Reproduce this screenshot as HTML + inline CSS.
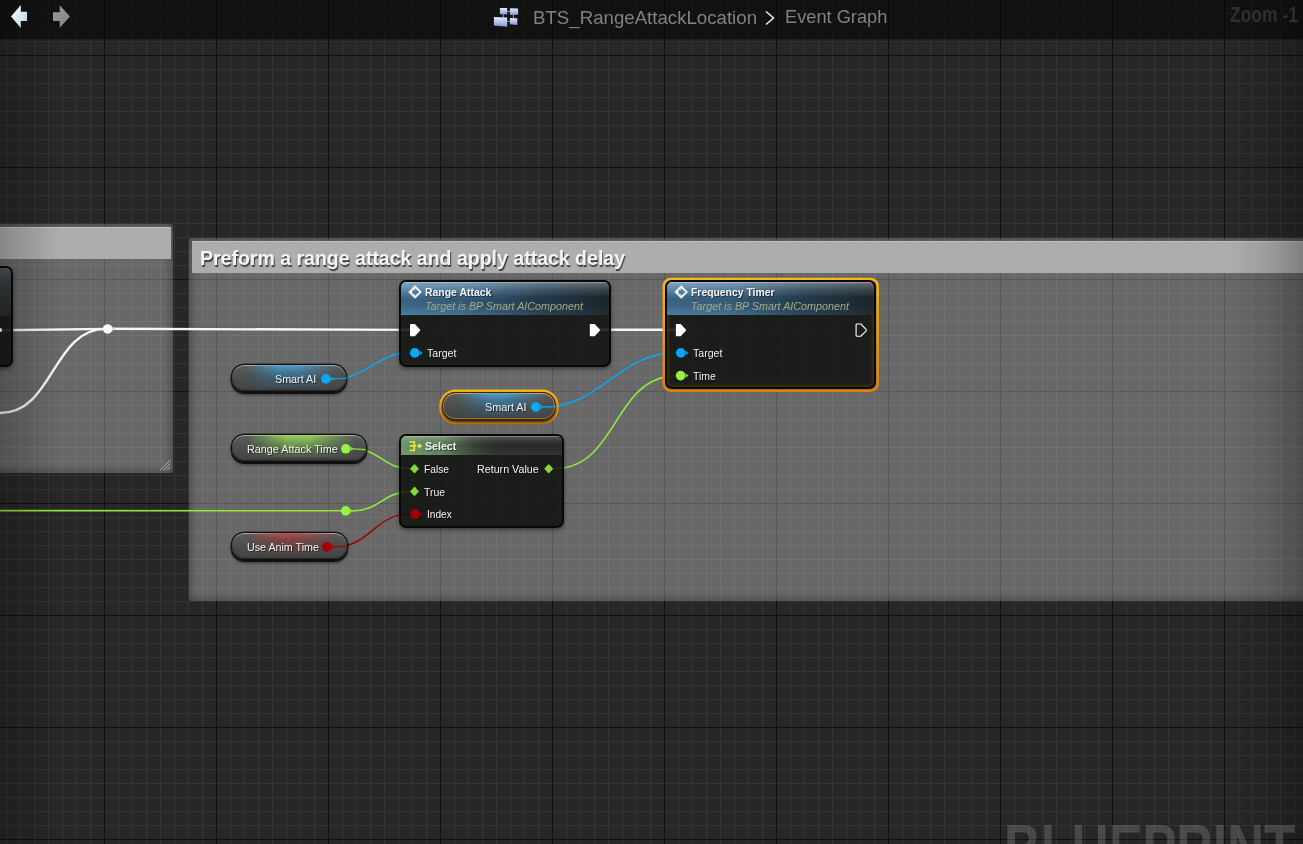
<!DOCTYPE html>
<html>
<head>
<meta charset="utf-8">
<title>BTS_RangeAttackLocation - Event Graph</title>
<style>
html,body{margin:0;padding:0;background:#262626;}
body{width:1303px;height:844px;overflow:hidden;position:relative;font-family:"Liberation Sans",sans-serif;}
#g{position:absolute;left:0;top:0;width:1303px;height:844px;overflow:hidden;background-color:#272727;
background-image:
 linear-gradient(to right,#111 1px,transparent 1px),
 linear-gradient(to bottom,#111 1px,transparent 1px),
 linear-gradient(to right,#343434 1px,transparent 1px),
 linear-gradient(to bottom,#343434 1px,transparent 1px);
background-size:112px 112px,112px 112px,14px 14px,14px 14px;
background-position:104px 0,0 55px,6px 0,0 13px;}
.abs{position:absolute;}
.t{position:absolute;white-space:nowrap;line-height:1;transform-origin:0 0;}
/* comments */
.cm{position:absolute;background:rgba(255,255,255,0.3);border-radius:3px;box-shadow:inset 0 0 9px 2px rgba(0,0,0,0.3);}
.cmt{position:absolute;background:#adadad;box-shadow:inset 0 1px 0 rgba(255,255,255,0.25);}
/* nodes */
.node{position:absolute;box-sizing:border-box;border:2px solid #080808;border-radius:7px;background:rgba(16,18,16,0.87);box-shadow:0 2px 4px rgba(0,0,0,0.45);overflow:hidden;}
.hdr{position:absolute;left:0;top:0;right:0;}
.pill{position:absolute;box-sizing:border-box;border:solid #101010;border-width:1px 1px 2px 1px;border-radius:13.5px;background:linear-gradient(to bottom,rgba(88,92,90,0.84) 0,rgba(70,74,72,0.84) 45%,rgba(60,63,62,0.86) 100%);box-shadow:0 2px 3px rgba(0,0,0,0.45),0 0 0 0.5px rgba(0,0,0,0.7),0 1px 0 rgba(0,0,0,0.6),inset 0 1px 0.5px rgba(255,255,255,0.5),inset 0 -1px 2px rgba(0,0,0,0.5);overflow:hidden;}
.pill i{position:absolute;left:11%;right:7%;top:0;height:84%;-webkit-mask-image:linear-gradient(to right,transparent 0,#000 36%,#000 56%,transparent 100%);mask-image:linear-gradient(to right,transparent 0,#000 36%,#000 56%,transparent 100%);}
.sel{position:absolute;box-sizing:border-box;border:2px solid #f0a010;}
.w{color:#f2f2f2;text-shadow:1px 1px 0 rgba(0,0,0,0.7);}

.fn{background:
 linear-gradient(to bottom,rgba(255,255,255,0.30) 0,rgba(255,255,255,0.12) 22%,rgba(255,255,255,0) 45%),
 linear-gradient(to bottom,rgba(8,16,24,0) 15%,rgba(8,16,24,0.26) 55%,rgba(8,16,24,0.2) 72%,rgba(8,16,24,0) 100%),
 linear-gradient(97deg,rgba(78,130,168,0.97) 0,rgba(70,120,158,0.93) 30%,rgba(48,80,104,0.8) 66%,rgba(38,52,62,0.6) 100%);
 box-shadow:inset 0 1px 0 rgba(255,255,255,0.3);}
.vb i{background:linear-gradient(to bottom,rgba(88,165,210,0.9) 0,rgba(58,130,176,0.8) 30%,rgba(48,106,144,0.5) 70%,rgba(44,96,132,0.35) 100%);}
.vg i{background:linear-gradient(to bottom,rgba(160,215,100,0.95) 0,rgba(128,185,80,0.85) 30%,rgba(100,140,70,0.55) 70%,rgba(92,128,66,0.4) 100%);}
.vr i{background:linear-gradient(to bottom,rgba(185,80,80,0.9) 0,rgba(140,62,62,0.75) 30%,rgba(112,60,60,0.5) 70%,rgba(104,58,58,0.35) 100%);}
.selp{border-color:#3a2606;box-shadow:0 2px 3px rgba(0,0,0,0.45),inset 0 0 0 1px rgba(235,160,30,0.5),inset 0 1px 0.5px rgba(255,255,255,0.5);}
</style>
</head>
<body>
<div id="g">
<div class="cm" style="left:-20px;top:224px;width:193px;height:249px;"></div>
<div class="cmt" style="left:-20px;top:227px;width:191px;height:32px;"></div>
<svg class="abs" style="left:158px;top:458px;" width="14" height="14" viewBox="0 0 14 14"><g stroke="#b5b5b5" stroke-width="1" fill="none"><path d="M2 12.5L12.5 2M5.5 12.5L12.5 5.5M9 12.5L12.5 9"/></g></svg>
<div class="cm" style="left:189px;top:238px;width:1140px;height:363px;"></div>
<div class="cmt" style="left:192px;top:241px;width:1140px;height:32px;"></div>

<svg class="abs" style="left:0;top:0;" width="1303" height="844" viewBox="0 0 1303 844" fill="none">
<g stroke="#f6f6f6" stroke-width="2.4" stroke-linecap="round">
<path d="M0 330.2L108 328.9"/>
<path d="M0 413C54 413 52 328.9 106 328.9"/>
<path d="M108 328.8L415 329.9"/>
<path d="M595 329.8L681 329.8"/>
</g>
<g stroke="#0ea5ee" stroke-width="1.6">
<path d="M326 378.9L333.3 378.9C367.8 378.9 375.4 352.9 409.9 352.9L415 352.9"/>
<path d="M536 407L543.8 407C601.8 407 618 352.9 676 352.9L681 352.9"/>
</g>
<g stroke="#90e83e" stroke-width="1.6">
<path d="M346 448.8L353.7 448.8C379.1 448.8 384.6 468.8 410 468.8L414 468.8"/>
<path d="M0 510.6L346 510.8"/>
<path d="M346 510.9L353.4 510.9C378.8 510.9 384.6 491.4 410 491.4L414 491.4"/>
<path d="M549 468.8L553.2 468.8C619.7 468.8 611.5 375.6 678 375.6L681 375.6"/>
</g>
<g stroke="#a00505" stroke-width="1.6">
<path d="M327 546.9L334.7 546.9C370.7 546.9 374.2 514 410.2 514L415 514"/>
</g>
<!-- reroute knots -->
<circle cx="107.65" cy="328.95" r="4.75" fill="#fbfbfb"/><path d="M112.3 326.6L115.3 328.9L112.3 331.2Z" fill="#d4d4d4"/>
<circle cx="345.7" cy="510.9" r="4.8" fill="#98f244"/><path d="M350.4 508.6L353.4 510.9L350.4 513.2Z" fill="#84d43a"/>
</svg>

<!-- left partial node -->
<div class="node" style="left:-30px;top:266px;width:43px;height:101px;">
 <div class="hdr" style="height:48px;background:linear-gradient(to bottom,#565b5e 0,#3a3e40 30%,#2a2d2e 100%);"></div>
</div>
<div class="abs" style="left:-1px;top:327.8px;width:3px;height:4.4px;border-radius:1.5px;background:#f4f4f4;"></div>

<!-- Range Attack -->
<div class="node" style="left:399px;top:280px;width:212px;height:87px;">
 <div class="hdr fn" style="height:33px;"></div>
</div>
<!-- Frequency Timer (selected) -->
<svg class="abs" style="left:0;top:0;" width="1303" height="844" viewBox="0 0 1303 844" fill="none">
<defs>
<linearGradient id="sg1" gradientUnits="userSpaceOnUse" x1="0" y1="278" x2="0" y2="392"><stop offset="0" stop-color="#f8b616"/><stop offset="1" stop-color="#e37b08"/></linearGradient>
<linearGradient id="sg2" gradientUnits="userSpaceOnUse" x1="0" y1="390" x2="0" y2="424"><stop offset="0" stop-color="#f8b616"/><stop offset="1" stop-color="#e37b08"/></linearGradient>
</defs>
<rect x="663.85" y="278.95" width="213.8" height="111.85" rx="7" ry="7" stroke="url(#sg1)" stroke-width="2.5"/>
<rect x="440.45" y="390.75" width="117" height="32.2" rx="15" ry="15" stroke="url(#sg2)" stroke-width="2.5"/>
</svg>
<div class="node" style="left:665px;top:280px;width:211px;height:109px;box-shadow:inset 0 0 3px 1.5px rgba(150,85,10,0.35);">
 <div class="hdr fn" style="height:33px;"></div>
</div>
<!-- Select -->
<div class="node" style="left:399px;top:434px;width:165px;height:94px;">
 <div class="hdr" style="height:19px;background:linear-gradient(to bottom,rgba(255,255,255,0.22) 0,rgba(255,255,255,0.05) 30%,rgba(255,255,255,0) 50%,rgba(255,255,255,0.06) 100%),linear-gradient(to right,rgba(112,152,106,0.95) 0,rgba(100,138,95,0.9) 24%,rgba(70,88,68,0.6) 45%,rgba(54,58,54,0.5) 58%,rgba(50,52,50,0.5) 100%);box-shadow:inset 0 1px 0 rgba(255,255,255,0.25);"></div>
</div>
<!-- variable pills -->
<div class="pill vb" style="left:231px;top:364px;width:116px;height:29px;"><i></i></div>
<div class="pill vb selp" style="left:442px;top:392px;width:114px;height:29px;"><i></i></div>
<div class="pill vg" style="left:231px;top:434px;width:136px;height:29px;"><i></i></div>
<div class="pill vr" style="left:231px;top:532px;width:117px;height:29px;"><i></i></div>

<!-- pins -->
<svg class="abs" style="left:0;top:0;" width="1303" height="844" viewBox="0 0 1303 844">
<!-- bright wire stubs over pills -->
<g fill="none" stroke-width="1.3" opacity="0.85">
<path d="M333 378.9L347 378.4" stroke="#0ea5ee"/>
<path d="M543 407L557 406.5" stroke="#0ea5ee"/>
<path d="M353 448.8L366 449.6" stroke="#90e83e"/>
<path d="M334 546.9L348 546.2" stroke="#a00505"/>
</g>
<!-- exec pins -->
<g transform="translate(410 330.1)" fill="#fcfcfc"><path d="M0 -5.3L0 5.3Q0 6.1 .8 6.1L4.8 6.1L10 0.7Q10.5 0 10 -0.7L4.8 -6.1L.8 -6.1Q0 -6.1 0 -5.3Z"/></g>
<g transform="translate(589.8 330.1)" fill="#fcfcfc"><path d="M0 -5.3L0 5.3Q0 6.1 .8 6.1L4.8 6.1L10 0.7Q10.5 0 10 -0.7L4.8 -6.1L.8 -6.1Q0 -6.1 0 -5.3Z"/></g>
<g transform="translate(675.9 330.1)" fill="#fcfcfc"><path d="M0 -5.3L0 5.3Q0 6.1 .8 6.1L4.8 6.1L10 0.7Q10.5 0 10 -0.7L4.8 -6.1L.8 -6.1Q0 -6.1 0 -5.3Z"/></g>
<g transform="translate(856.1 330.1)" fill="none" stroke="#fcfcfc" stroke-width="1.1"><path d="M0 -5.3L0 5.3Q0 6.1 .8 6.1L4.8 6.1L10 0.7Q10.5 0 10 -0.7L4.8 -6.1L.8 -6.1Q0 -6.1 0 -5.3Z"/></g>
<!-- object pins -->
<g fill="#0aa8f4">
<g transform="translate(414.8 352.9)" ><circle cx="0" cy="0" r="4.8"/><path d="M5 -2.3L7.9 0L5 2.3Z" opacity="0.85"/></g>
<g transform="translate(680.8 352.9)" ><circle cx="0" cy="0" r="4.8"/><path d="M5 -2.3L7.9 0L5 2.3Z" opacity="0.85"/></g>
<g transform="translate(325.9 378.9)" ><circle cx="0" cy="0" r="4.8"/><path d="M5 -2.3L7.9 0L5 2.3Z" opacity="0.85"/></g>
<g transform="translate(535.9 407)" ><circle cx="0" cy="0" r="4.8"/><path d="M5 -2.3L7.9 0L5 2.3Z" opacity="0.85"/></g>
</g>
<g fill="#98f244">
<g transform="translate(680.6 375.6)" ><circle cx="0" cy="0" r="4.8"/><path d="M5 -2.3L7.9 0L5 2.3Z" opacity="0.85"/></g>
<g transform="translate(345.8 448.8)" ><circle cx="0" cy="0" r="4.8"/><path d="M5 -2.3L7.9 0L5 2.3Z" opacity="0.85"/></g>
</g>
<g fill="#a30000">
<g transform="translate(326.8 546.9)" ><circle cx="0" cy="0" r="4.8"/><path d="M5 -2.3L7.9 0L5 2.3Z" opacity="0.85"/></g>
<g transform="translate(415 514)" ><circle cx="0" cy="0" r="4.8"/><path d="M5 -2.3L7.9 0L5 2.3Z" opacity="0.85"/></g>
</g>
<!-- wildcard diamonds -->
<g fill="#86d83c">
<path d="M410 468.8L414.5 464L419 468.8L414.5 473.6Z"/>
<path d="M410 491.4L414.5 486.6L419 491.4L414.5 496.2Z"/>
<path d="M544.2 468.8L548.7 464L553.2 468.8L548.7 473.6Z"/>
</g>
<!-- function icons -->
<g fill="#fafafa" stroke="#fafafa" stroke-width="0.5" stroke-linejoin="round">
<g transform="translate(415.05 291.95)" ><path fill-rule="evenodd" d="M-6.5 0L0 -6.5L6.5 0L0 6.5Z M-3 -2.2L-0.6 -2.2L-0.6 -4.5L4.7 0L-0.6 4.5L-0.6 2.2L-3 2.2Z"/></g>
<g transform="translate(681.2 291.95)" ><path fill-rule="evenodd" d="M-6.5 0L0 -6.5L6.5 0L0 6.5Z M-3 -2.2L-0.6 -2.2L-0.6 -4.5L4.7 0L-0.6 4.5L-0.6 2.2L-3 2.2Z"/></g>
</g>
<!-- select icon -->
<g fill="none" stroke="#e6e63a" stroke-width="1.7">
<path d="M409.6 441.75L414.25 441.75L414.25 450.35L409.6 450.35M409.8 445.95L416 445.95"/>
</g>
<path d="M416.8 445.2L418.6 445.2L418.6 443.1L422.4 446L418.6 448.9L418.6 446.8L416.8 446.8Z" fill="#e6e63a"/>
</svg>

<div class="abs" style="left:0;top:0;width:1303px;height:39px;background:rgba(0,0,0,0.56);"></div>
<div class="abs" style="left:0;top:39px;width:1303px;height:3px;background:linear-gradient(to bottom,rgba(0,0,0,0.22),rgba(0,0,0,0));"></div>
<div class="abs" style="left:0;top:0;width:60px;height:844px;background:linear-gradient(to right,rgba(0,0,0,0.22),rgba(0,0,0,0));"></div>
<div class="abs" style="left:1228px;top:0;width:75px;height:844px;background:linear-gradient(to left,rgba(0,0,0,0.26),rgba(0,0,0,0.1) 45%,rgba(0,0,0,0));"></div>
<!-- nav arrows -->
<svg class="abs" style="left:0;top:0;" width="100" height="39" viewBox="0 0 100 39">
<defs><linearGradient id="ag" x1="0" y1="0" x2="1" y2="1"><stop offset="0" stop-color="#ffffff"/><stop offset="1" stop-color="#b9d4de"/></linearGradient>
<linearGradient id="ag2" x1="0" y1="0" x2="1" y2="1"><stop offset="0" stop-color="#9a9a9a"/><stop offset="1" stop-color="#848484"/></linearGradient></defs>
<path d="M11 16.4L20.8 4.9L20.8 11.7L27 11.7L27 20.9L20.8 20.9L20.8 27.9Z" fill="url(#ag)"/>
<path d="M70 16.5L59.7 5.3L59.7 12.2L53 12.2L53 21L59.7 21L59.7 27.7Z" fill="url(#ag2)"/>
</svg>
<!-- blueprint icon -->
<svg class="abs" style="left:493px;top:7px;" width="26" height="21" viewBox="0 0 26 21">
<defs><linearGradient id="bg1" x1="0" y1="0" x2="0" y2="1"><stop offset="0" stop-color="#e4eaff"/><stop offset="1" stop-color="#8a97d4"/></linearGradient></defs>
<path d="M14.2 4.4L16.9 4.4M10.3 7.4L10.3 10.3M20.4 7.9L20.4 11M14.2 14.4L16.9 14.4" stroke="#9aa6d6" stroke-width="1" fill="none"/>
<g fill="url(#bg1)">
<path d="M6.9 1L14.2 1.1L14.2 7.6L6.9 7.3Z"/>
<path d="M16.9 1.3L25.1 1.6L25.1 7.8L16.9 8Z"/>
<path d="M0.9 10.1L14.2 10.5L14.2 19.8L0.9 18.6Z"/>
<path d="M16.9 10.9L24.3 11.2L24.3 17.9L16.9 17.3Z"/>
</g>
</svg>
<!-- chevron -->
<svg class="abs" style="left:763px;top:9px;" width="14" height="18" viewBox="0 0 14 18"><path d="M3 2.5L10.5 9L3 15.5" fill="none" stroke="#eeeeee" stroke-width="1.5"/></svg>

<div id="tx" style="position:absolute;left:0;top:0;width:1303px;height:844px;opacity:0.999;">
<span class="t" style="left:532.6px;top:8.74px;font-size:18.5px;transform:scaleX(1.0084);color:#818181;">BTS_RangeAttackLocation</span>
<span class="t" style="left:784.6px;top:8.34px;font-size:18.5px;transform:scaleX(0.9848);color:#818181;">Event Graph</span>
<span class="t" style="left:1229.5px;top:4.70px;font-size:21.5px;transform:scaleX(0.8133);color:#2f2f2f;font-weight:bold;">Zoom -1</span>
<span class="t" style="left:200px;top:247.79px;font-size:20.8px;transform:scaleX(0.9380);color:#f4f4f4;font-weight:bold;text-shadow:1px 1.5px 1px rgba(0,0,0,0.65);">Preform a range attack and apply attack delay</span>
<span class="t" style="left:425.4px;top:286.66px;font-size:10.8px;transform:scaleX(0.9663);color:#f4f4f4;font-weight:bold;text-shadow:1px 1px 0 rgba(0,0,0,0.5);">Range Attack</span>
<span class="t" style="left:425.4px;top:301.36px;font-size:10.8px;transform:scaleX(0.9972);color:#a4a983;font-style:italic;">Target is BP Smart AIComponent</span>
<span class="t" style="left:427.0px;top:347.71px;font-size:10.5px;transform:scaleX(1.0073);color:#f0f0f0;text-shadow:1px 1px 0 rgba(0,0,0,0.5);">Target</span>
<span class="t" style="left:691.4px;top:286.66px;font-size:10.8px;transform:scaleX(0.9618);color:#f4f4f4;font-weight:bold;text-shadow:1px 1px 0 rgba(0,0,0,0.5);">Frequency Timer</span>
<span class="t" style="left:691.4px;top:301.36px;font-size:10.8px;transform:scaleX(0.9972);color:#a4a983;font-style:italic;">Target is BP Smart AIComponent</span>
<span class="t" style="left:692.8px;top:347.71px;font-size:10.5px;transform:scaleX(1.0073);color:#f0f0f0;text-shadow:1px 1px 0 rgba(0,0,0,0.5);">Target</span>
<span class="t" style="left:692.8px;top:370.61px;font-size:10.5px;transform:scaleX(0.9890);color:#f0f0f0;text-shadow:1px 1px 0 rgba(0,0,0,0.5);">Time</span>
<span class="t" style="left:274.5px;top:373.81px;font-size:10.5px;transform:scaleX(1.0232);color:#f0f0f0;text-shadow:1px 1px 0 rgba(0,0,0,0.45);">Smart AI</span>
<span class="t" style="left:485.2px;top:401.81px;font-size:10.5px;transform:scaleX(1.0331);color:#f0f0f0;text-shadow:1px 1px 0 rgba(0,0,0,0.45);">Smart AI</span>
<span class="t" style="left:247.3px;top:443.71px;font-size:10.5px;transform:scaleX(1.0302);color:#f0f0f0;text-shadow:1px 1px 0 rgba(0,0,0,0.45);">Range Attack Time</span>
<span class="t" style="left:424.8px;top:440.56px;font-size:10.8px;transform:scaleX(0.9839);color:#f4f4f4;font-weight:bold;text-shadow:1px 1px 0 rgba(0,0,0,0.5);">Select</span>
<span class="t" style="left:424.3px;top:463.51px;font-size:10.5px;transform:scaleX(0.9732);color:#f0f0f0;text-shadow:1px 1px 0 rgba(0,0,0,0.5);">False</span>
<span class="t" style="left:424.3px;top:486.91px;font-size:10.5px;transform:scaleX(0.9904);color:#f0f0f0;text-shadow:1px 1px 0 rgba(0,0,0,0.5);">True</span>
<span class="t" style="left:427.2px;top:508.71px;font-size:10.5px;transform:scaleX(0.9655);color:#f0f0f0;text-shadow:1px 1px 0 rgba(0,0,0,0.5);">Index</span>
<span class="t" style="left:476.8px;top:463.51px;font-size:10.5px;transform:scaleX(1.0196);color:#f0f0f0;text-shadow:1px 1px 0 rgba(0,0,0,0.5);">Return Value</span>
<span class="t" style="left:247.4px;top:541.71px;font-size:10.5px;transform:scaleX(1.0183);color:#f0f0f0;text-shadow:1px 1px 0 rgba(0,0,0,0.45);">Use Anim Time</span>
<span class="t" style="left:1003.5px;top:815.13px;font-size:66px;transform:scaleX(0.7705);color:rgba(255,255,255,0.16);font-weight:bold;">BLUEPRINT</span>
</div>
</div>
</body>
</html>
